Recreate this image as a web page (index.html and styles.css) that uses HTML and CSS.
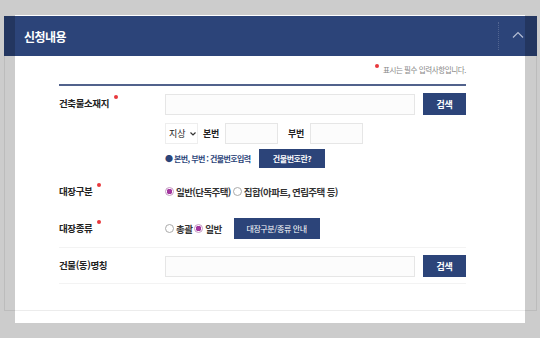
FILE: index.html
```html
<!DOCTYPE html>
<html lang="ko">
<head>
    <meta charset="utf-8">
    <title>신청내용</title>
    <link rel="stylesheet" href="styles.css">
</head>
<body>
    <div class="panel">
        <div class="panel_head">
            <h2 class="panel_title">신청내용</h2>
            <button class="panel_toggle" type="button">
                <svg width="12" height="8" viewBox="0 0 12 8"><polyline points="1,6.5 6,1.5 11,6.5" fill="none" stroke="#b4bdd3" stroke-width="1.2"/></svg>
            </button>
        </div>
        <div class="panel_body">
            <p class="notice"><span class="req"></span>표시는 필수 입력사항입니다.</p>
            <div class="form">
                <div class="row row_addr">
                    <div class="label"><span>건축물소재지</span><span class="req"></span></div>
                    <div class="field">
                        <div class="line">
                            <input class="text wide" type="text">
                            <button class="btn btn_search" type="button">검색</button>
                        </div>
                        <div class="line line_num">
                            <div class="select">지상 <svg width="6" height="4" viewBox="0 0 6 4"><polyline points="0.5,0.5 3,3 5.5,0.5" fill="none" stroke="#333" stroke-width="1.2"/></svg></div>
                            <span class="sub">본번</span>
                            <input class="text num" type="text">
                            <span class="sub sub_gap">부번</span>
                            <input class="text num" type="text">
                        </div>
                        <div class="line line_hint">
                            <span class="hint">● 본번, 부번 : 건물번호입력</span>
                            <button class="btn btn_small" type="button">건물번호란?</button>
                        </div>
                    </div>
                </div>
                <div class="row row_kind">
                    <div class="label"><span>대장구분</span><span class="req"></span></div>
                    <div class="field">
                        <div class="line radios">
                            <span class="radio on"></span><span>일반(단독주택)</span>
                            <span class="radio"></span><span>집합(아파트, 연립주택 등)</span>
                        </div>
                    </div>
                </div>
                <div class="row row_type">
                    <div class="label"><span>대장종류</span><span class="req"></span></div>
                    <div class="field">
                        <div class="line radios">
                            <span class="radio"></span><span>총괄</span>
                            <span class="radio on"></span><span>일반</span>
                            <button class="btn btn_guide" type="button">대장구분/종류 안내</button>
                        </div>
                    </div>
                </div>
                <div class="row row_name">
                    <div class="label"><span>건물(동)명칭</span></div>
                    <div class="field">
                        <div class="line">
                            <input class="text wide" type="text">
                            <button class="btn btn_search" type="button">검색</button>
                        </div>
                    </div>
                </div>
            </div>
        </div>
    </div>
    <div class="spotlight"></div>
</body>
</html>
```

FILE: styles.css
```css
body {
    margin: 0;
    background: #fff;
    font-family: "Noto Sans CJK KR", "Noto Sans", sans-serif;
    color: #222;
    overflow: hidden;
}

.panel {
    margin: 16px 3px 0 4px;
    height: 295px;
    border: 1px solid #ececec;
    border-top: 0;
    box-sizing: border-box;
}

.panel_head {
    display: flex;
    align-items: center;
    height: 40px;
    margin: 0 -1px;
    padding-left: 20px;
    background: #2c4479;
}

.panel_title {
    flex: 1;
    margin: 0;
    font-size: 12px;
    font-weight: 700;
    letter-spacing: -0.5px;
    color: #fff;
}

.panel_toggle {
    display: flex;
    align-items: center;
    justify-content: center;
    width: 39px;
    height: 28px;
    padding: 0 0 2px 0;
    border: 0;
    border-left: 1px dotted rgba(255, 255, 255, 0.18);
    background: none;
}

.panel_body {
    width: 407px;
    margin-left: 54px;
}

.notice {
    display: flex;
    justify-content: flex-end;
    align-items: flex-start;
    margin: 0;
    padding-top: 8px;
    height: 20px;
    font-size: 7.5px;
    letter-spacing: -0.4px;
    color: #888;
    line-height: 12px;
}

.notice .req {
    margin: 0 4px 0 0;
}

.req {
    display: inline-block;
    width: 4px;
    height: 4px;
    border-radius: 50%;
    background: #e8383d;
}

.form {
    border-top: 2px solid #51628c;
}

.row {
    display: grid;
    grid-template-columns: 106px 301px;
}

.label {
    display: flex;
    align-items: flex-start;
    height: 21px;
    line-height: 21px;
    font-size: 9.5px;
    font-weight: 700;
    letter-spacing: -0.4px;
}

.label .req {
    margin: 2px 0 0 5px;
}

.line {
    display: flex;
    align-items: center;
    font-size: 9px;
}

.row_addr {
    padding: 7px 0 12px;
}

.row_kind {
    padding: 1px 0 0;
}

.row_type {
    padding: 16px 0 8px;
    border-bottom: 1px solid #f3f3f3;
}

.row_name {
    padding: 7px 0 6px;
    border-bottom: 1px solid #f3f3f3;
}

.text {
    height: 21px;
    box-sizing: border-box;
    border: 1px solid #e6e6e6;
    background: #fcfcfc;
    margin: 0;
    padding: 0 4px;
}

.wide {
    width: 250px;
}

.num {
    width: 53px;
}

.btn {
    border: 0;
    padding: 0;
    background: #2c4479;
    color: #fff;
    font-family: inherit;
    letter-spacing: -0.4px;
}

.btn_search {
    width: 43px;
    height: 22px;
    margin-left: 8px;
    font-size: 9px;
    font-weight: 700;
}

.line_num {
    margin-top: 8px;
}

.select {
    display: flex;
    align-items: center;
    gap: 4px;
    width: 33px;
    height: 21px;
    box-sizing: border-box;
    padding-left: 3px;
    border: 1px solid #eee;
    font-size: 9px;
}

.sub {
    width: 22px;
    margin-left: 5px;
    font-weight: 700;
    letter-spacing: -0.3px;
}

.sub_gap {
    margin-left: 10px;
}

.line_hint {
    margin-top: 5px;
}

.hint {
    width: 94px;
    font-size: 8px;
    font-weight: 700;
    letter-spacing: -0.6px;
    color: #2c4479;
}

.btn_small {
    width: 66px;
    height: 19px;
    font-size: 8px;
    font-weight: 700;
}

.radios {
    height: 21px;
    font-size: 9.5px;
    font-weight: 700;
    letter-spacing: -0.6px;
    color: #333;
}

.radio {
    width: 7px;
    height: 7px;
    border: 1px solid #aaa;
    border-radius: 50%;
    margin-right: 2px;
    background: #fff;
}

.radios span + .radio {
    margin-left: 2px;
}

.radio.on {
    border-color: #c59ac4;
    background: radial-gradient(circle, #a3369f 0 2.6px, #fff 3px);
}

.btn_guide {
    width: 86px;
    height: 21px;
    margin-left: 12px;
    font-size: 8px;
    font-weight: 400;
}

.spotlight {
    position: absolute;
    left: 15px;
    top: 15px;
    width: 510px;
    height: 308px;
    box-shadow: 0 0 0 1000px rgba(0, 0, 0, 0.2);
    pointer-events: none;
}
```
